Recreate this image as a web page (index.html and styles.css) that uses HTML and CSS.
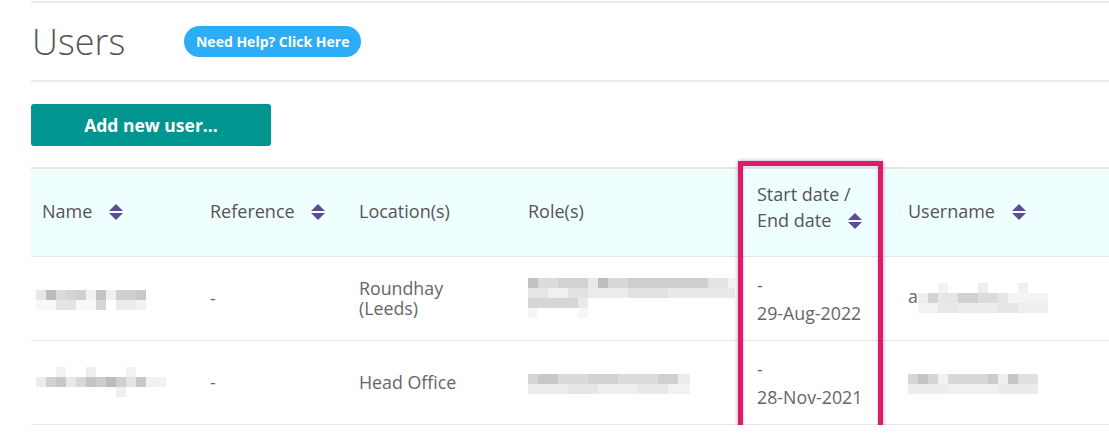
FILE: index.html
```html
<!DOCTYPE html>
<html lang="en">

<head>
    <meta charset="UTF-8" />
    <meta name="viewport" content="width=device-width, initial-scale=1.0" />
    <title>Users</title>

    <link rel="stylesheet" href="styles.css">
</head>

<body>
    <div class="page">
        <div class="page-head">
            <h1 class="title">Users</h1>
            <a class="help-pill" href="#">Need Help? Click Here</a>
        </div>

        <button type="button" class="add-user">Add new user...</button>

        <table class="users">
            <colgroup>
                <col class="col-name">
                <col class="col-ref">
                <col class="col-loc">
                <col class="col-role">
                <col class="col-date">
                <col class="col-user">
            </colgroup>
            <thead>
                <tr>
                    <th>Name <svg class="sort" viewBox="0 0 14 16"><polygon points="7,0 14,7 0,7" /><polygon points="0,9 14,9 7,16" /></svg></th>
                    <th>Reference <svg class="sort" viewBox="0 0 14 16"><polygon points="7,0 14,7 0,7" /><polygon points="0,9 14,9 7,16" /></svg></th>
                    <th>Location(s)</th>
                    <th>Role(s)</th>
                    <th class="th-dates">Start date /<br>End date <svg class="sort" viewBox="0 0 14 16"><polygon points="7,0 14,7 0,7" /><polygon points="0,9 14,9 7,16" /></svg></th>
                    <th>Username <svg class="sort" viewBox="0 0 14 16"><polygon points="7,0 14,7 0,7" /><polygon points="0,9 14,9 7,16" /></svg></th>
                </tr>
            </thead>
            <tbody>
                <tr>
                    <td><span class="mosaic m-name-1"></span></td>
                    <td>-</td>
                    <td class="loc">Roundhay<br>(Leeds)</td>
                    <td><span class="mosaic m-role-1"></span></td>
                    <td class="dates">-<br>29-Aug-2022</td>
                    <td>a<span class="mosaic m-user-1"></span></td>
                </tr>
                <tr>
                    <td><span class="mosaic m-name-2"></span></td>
                    <td>-</td>
                    <td class="loc">Head Office</td>
                    <td><span class="mosaic m-role-2"></span></td>
                    <td class="dates">-<br>28-Nov-2021</td>
                    <td><span class="mosaic m-user-2"></span></td>
                </tr>
            </tbody>
        </table>

        <div class="callout"></div>
    </div>
</body>

</html>
```

FILE: styles.css
```css
* {
    margin: 0;
    padding: 0;
    box-sizing: border-box;
}

html {
    font-family: "Open Sans", sans-serif;
}

body {
    background: #fff;
    overflow: hidden;
}

.page {
    border-top: 2px solid #ececec;
    margin: 1px 0 0 31px;
    position: relative;
}

.page-head {
    align-items: center;
    border-bottom: 2px solid #ececec;
    display: flex;
    height: 79px;
}

.title {
    color: #555;
    font-size: 36px;
    font-weight: 300;
    line-height: 1;
    margin: 0 59px 0 1px;
}

.help-pill {
    background-color: #2dadf6;
    border-radius: 16px;
    color: #fff;
    font-size: 14px;
    font-weight: 700;
    height: 31px;
    line-height: 31px;
    text-align: center;
    text-decoration: none;
    width: 177px;
}

.add-user {
    background-color: #00958f;
    border: none;
    border-radius: 3px;
    color: #fff;
    display: block;
    font-family: inherit;
    font-size: 17.5px;
    font-weight: 700;
    height: 42px;
    margin-top: 22px;
    width: 240px;
}

.users {
    border-collapse: collapse;
    border-top: 2px solid #e6e6e6;
    color: #666;
    font-size: 17.8px;
    margin-top: 21px;
    width: 1090px;
}

.col-name { width: 168px; }
.col-ref { width: 149px; }
.col-loc { width: 169px; }
.col-role { width: 229px; }
.col-date { width: 151px; }

.users th {
    background-color: #effefe;
    border-bottom: 1px solid #e6e6e6;
    color: #555;
    font-size: 18px;
    font-weight: 400;
    height: 88px;
    line-height: 26px;
    padding: 0 11px 3px;
    text-align: left;
    vertical-align: middle;
}

.users th.th-dates {
    padding-bottom: 10px;
}

.users td {
    border-bottom: 1px solid #e6e6e6;
    height: 84px;
    padding: 0 11px;
    vertical-align: middle;
}

.sort {
    fill: #5d4b98;
    height: 16px;
    margin-left: 12px;
    vertical-align: -2px;
    width: 14px;
}

.loc {
    line-height: 20px;
}

.dates {
    line-height: 28px;
    padding-top: 2px !important;
}

/* pixelated placeholders for hidden personal data */
.mosaic {
    display: inline-block;
    vertical-align: middle;
    background-repeat: no-repeat;
}

.m-name-1 {
    height: 20px;
    margin-left: -6px;
    width: 110px;
    background-image:
        linear-gradient(to right, #e6e6e6 0 10px, #bcbcbc 10px 20px, #dadada 20px 30px, #d4d4d4 30px 40px, #d0d0d0 40px 50px, #f2f2f2 50px 60px, #c4c4c4 60px 70px, #f0f0f0 70px 80px, #cfcfcf 80px 100px, #c9c9c9 100px 110px),
        linear-gradient(to right, #f8f8f8 0 20px, #e4e4e4 20px 40px, #f8f8f8 40px 60px, #d6d6d6 60px 70px, #fff 70px 80px, #ebebeb 80px 100px, #f2f2f2 100px 110px);
    background-size: 110px 10px, 110px 10px;
    background-position: 0 0, 0 10px;
}

.m-name-2 {
    height: 30px;
    margin-left: -6px;
    width: 130px;
    background-image:
        linear-gradient(to right, #fff 0 20px, #f2f2f2 20px 30px, #fff 30px 50px, #eee 50px 60px, #fff 60px 90px, #f3f3f3 90px 100px, #fff 100px 130px),
        linear-gradient(to right, #ececec 0 10px, #d0d0d0 10px 20px, #c8c8c8 20px 30px, #e8e8e8 30px 40px, #d8d8d8 40px 50px, #c4c4c4 50px 60px, #cdcdcd 60px 70px, #bcbcbc 70px 80px, #d0d0d0 80px 90px, #e4e4e4 90px 100px, #c9c9c9 100px 110px, #f2f2f2 110px 130px),
        linear-gradient(to right, #fff 0 80px, #f0f0f0 80px 90px, #fff 90px 130px);
    background-size: 130px 10px, 130px 10px, 130px 10px;
    background-position: 0 0, 0 10px, 0 20px;
}

.m-role-1 {
    height: 40px;
    width: 207px;
    background-image:
        linear-gradient(to right, #c2c2c2 0 10px, #dcdcdc 10px 30px, #d2d2d2 30px 60px, #e8e8e8 60px 70px, #bdbdbd 70px 80px, #d8d8d8 80px 100px, #cfcfcf 100px 180px, #e4e4e4 180px 200px, #f2f2f2 200px 207px),
        linear-gradient(to right, #e6e6e6 0 20px, #f0f0f0 20px 40px, #e2e2e2 40px 60px, #ececec 60px 100px, #e2e2e2 100px 140px, #e9e9e9 140px 200px),
        linear-gradient(to right, #d6d6d6 0 50px, #e9e9e9 50px 60px, #fff 60px 207px),
        linear-gradient(to right, #f6f6f6 0 10px, #fff 10px 50px, #f6f6f6 50px 60px, #fff 60px 207px);
    background-size: 207px 10px, 207px 10px, 207px 10px, 207px 10px;
    background-position: 0 0, 0 10px, 0 20px, 0 30px;
}

.m-role-2 {
    height: 20px;
    width: 162px;
    background-image:
        linear-gradient(to right, #d4d4d4 0 10px, #c8c8c8 10px 30px, #dadada 30px 60px, #d2d2d2 60px 90px, #dcdcdc 90px 130px, #d0d0d0 130px 150px, #ececec 150px 162px),
        linear-gradient(to right, #ececec 0 40px, #e6e6e6 40px 70px, #efefef 70px 110px, #e8e8e8 110px 140px, #f2f2f2 140px 162px);
    background-size: 162px 10px, 162px 10px;
    background-position: 0 0, 0 10px;
}

.m-user-1 {
    height: 30px;
    width: 130px;
    background-image:
        linear-gradient(to right, #fff 0 20px, #f2f2f2 20px 30px, #fff 30px 60px, #ededed 60px 70px, #fff 70px 100px, #f0f0f0 100px 110px, #fff 110px 130px),
        linear-gradient(to right, #eeeeee 0 10px, #d4d4d4 10px 20px, #e6e6e6 20px 40px, #d0d0d0 40px 60px, #dcdcdc 60px 80px, #e6e6e6 80px 90px, #f4f4f4 90px 130px),
        linear-gradient(to right, #f2f2f2 0 20px, #e8e8e8 20px 40px, #ededed 40px 80px, #e6e6e6 80px 100px, #eeeeee 100px 130px);
    background-size: 130px 10px, 130px 10px, 130px 10px;
    background-position: 0 0, 0 10px, 0 20px;
}

.m-user-2 {
    height: 20px;
    width: 130px;
    background-image:
        linear-gradient(to right, #d6d6d6 0 10px, #c4c4c4 10px 20px, #d6d6d6 20px 30px, #f2f2f2 30px 40px, #d8d8d8 40px 80px, #cccccc 80px 90px, #eeeeee 90px 100px, #c6c6c6 100px 110px, #e0e0e0 110px 130px),
        linear-gradient(to right, #ededed 0 40px, #f0f0f0 40px 90px, #ebebeb 90px 130px);
    background-size: 130px 10px, 130px 10px;
    background-position: 0 0, 0 10px;
}

/* highlight frame drawn over the dates column */
.callout {
    border: 5px solid #dd1a6b;
    box-shadow: 0 0 4px rgba(0, 0, 0, 0.35), inset 0 0 3px rgba(0, 0, 0, 0.25);
    height: 278px;
    left: 707px;
    position: absolute;
    top: 158px;
    width: 145px;
}
```
